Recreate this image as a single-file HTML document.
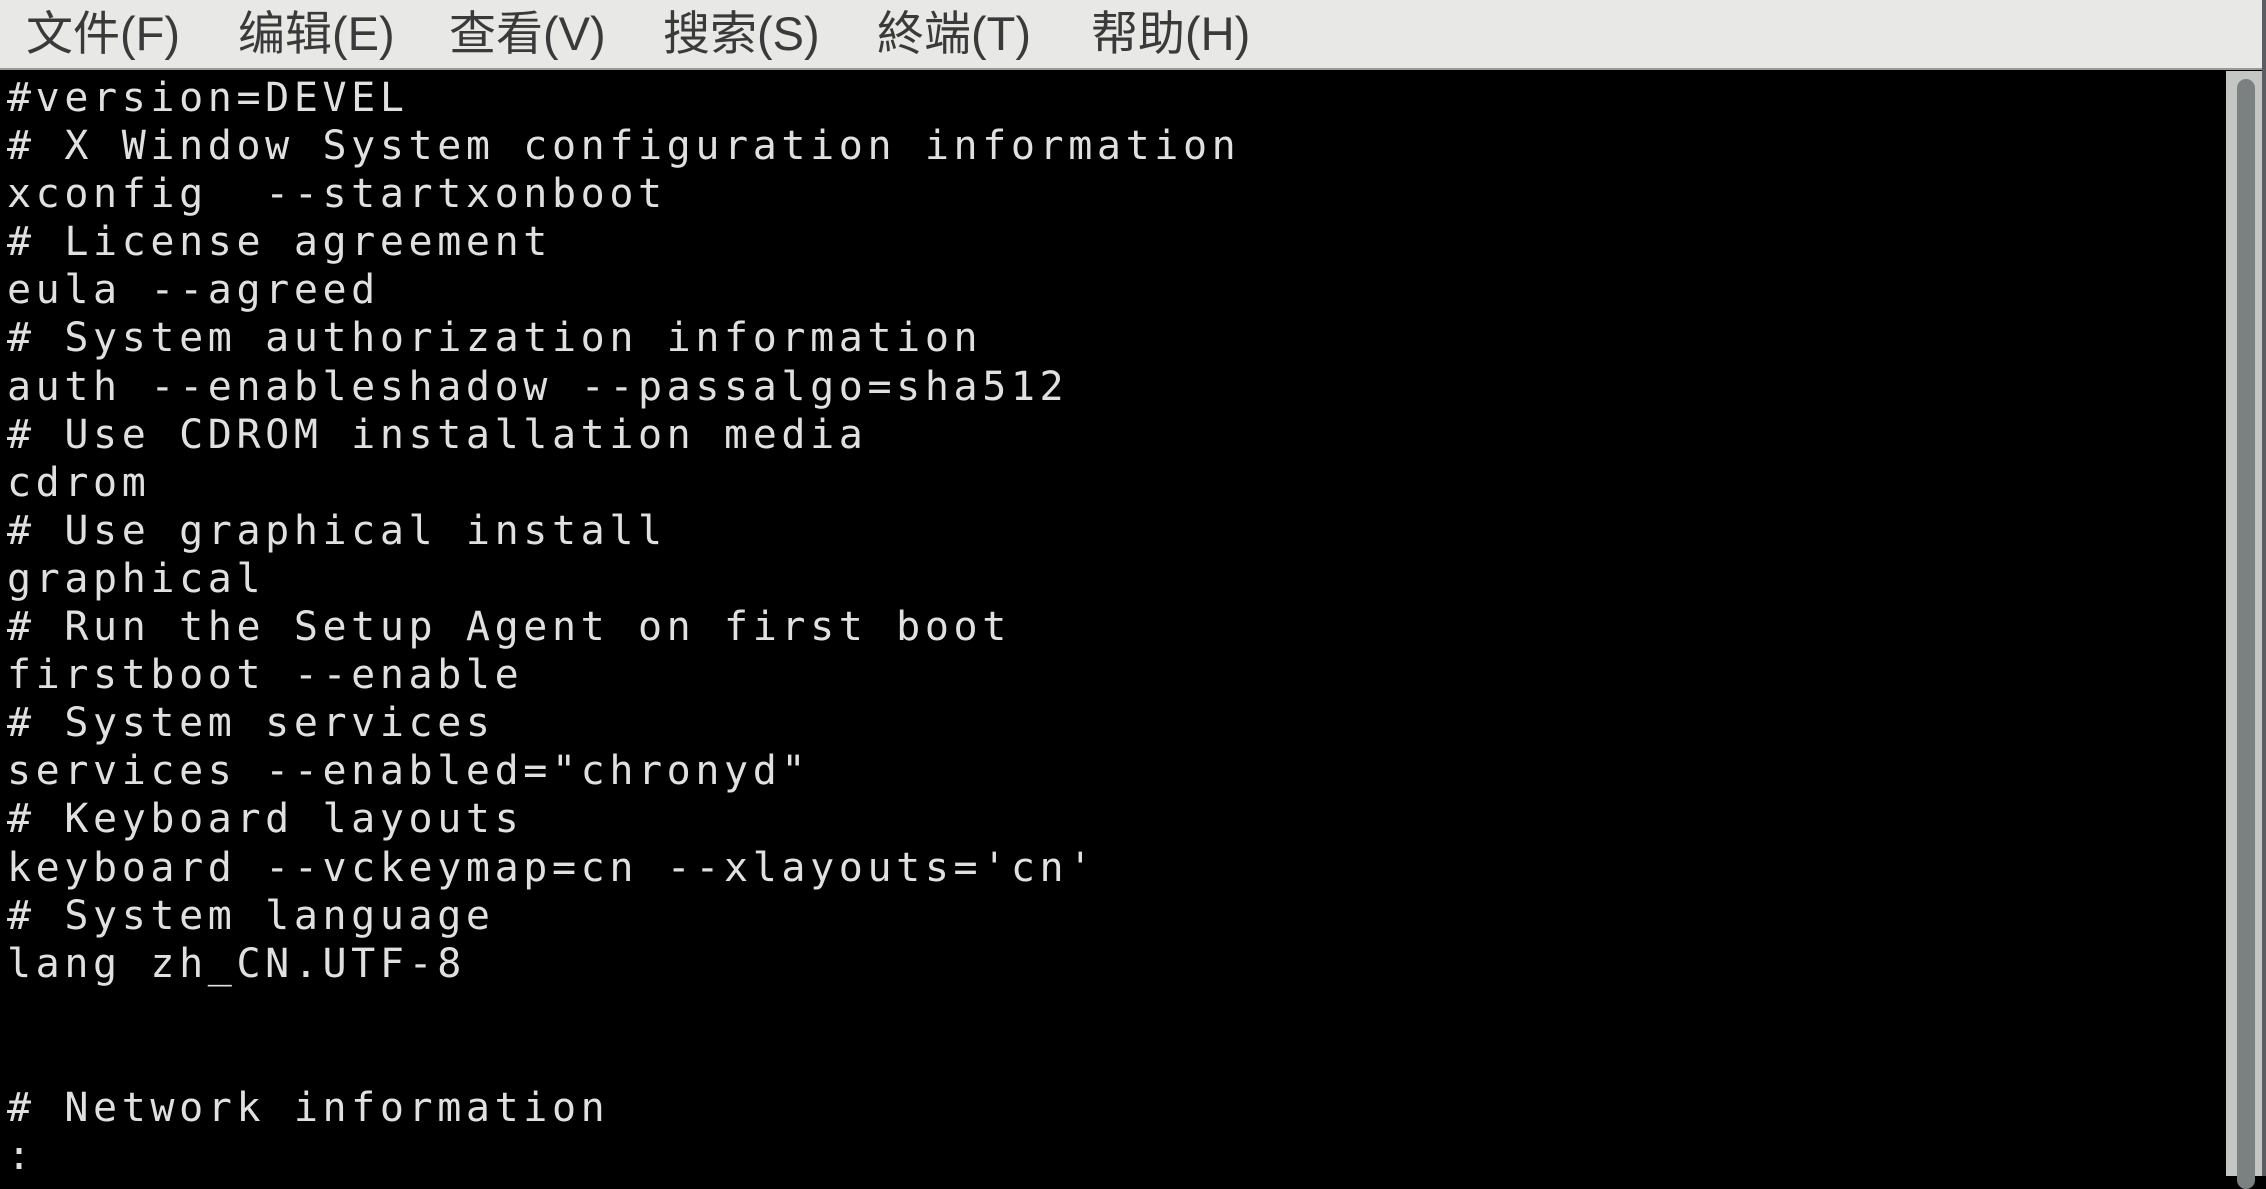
<!DOCTYPE html>
<html><head><meta charset="utf-8"><style>
html,body{margin:0;padding:0;width:2266px;height:1176px;overflow:hidden;background:#000;}
#menu{position:absolute;left:0;top:0;width:2266px;height:70px;background:#e8e8e7;border-bottom:2px solid #9a9a9a;box-sizing:border-box;}
#menu span{position:absolute;top:6px;font-family:"Liberation Sans","Noto Sans CJK SC",sans-serif;font-size:47px;line-height:56px;color:#3a3a3a;white-space:nowrap;}
#term{position:absolute;left:0;top:71px;width:2226px;height:1105px;background:#000;}
#text{position:absolute;left:7px;top:3px;margin:0;font-family:"DejaVu Sans Mono","Liberation Mono",monospace;font-size:40px;letter-spacing:4.6px;line-height:48.1px;color:#e0e0e0;white-space:pre;}
#sb{position:absolute;left:2226px;top:71px;width:40px;height:1105px;background:#c4c6c4;}
#thumb{position:absolute;left:11px;top:8px;width:18px;height:1110px;background:#7b8080;border-radius:9px;}
#edge{position:absolute;left:2262px;top:0;width:4px;height:1176px;background:#5a5e62;}
</style></head><body>
<div id="menu">
<span style="left:26px">文件(F)</span>
<span style="left:238px">编辑(E)</span>
<span style="left:449px">查看(V)</span>
<span style="left:663px">搜索(S)</span>
<span style="left:877px">終端(T)</span>
<span style="left:1091px">帮助(H)</span>
</div>
<div id="term"><pre id="text">#version=DEVEL
# X Window System configuration information
xconfig  --startxonboot
# License agreement
eula --agreed
# System authorization information
auth --enableshadow --passalgo=sha512
# Use CDROM installation media
cdrom
# Use graphical install
graphical
# Run the Setup Agent on first boot
firstboot --enable
# System services
services --enabled="chronyd"
# Keyboard layouts
keyboard --vckeymap=cn --xlayouts='cn'
# System language
lang zh_CN.UTF-8


# Network information
:</pre></div>
<div id="sb"><div id="thumb"></div></div>
<div id="edge"></div>
</body></html>
